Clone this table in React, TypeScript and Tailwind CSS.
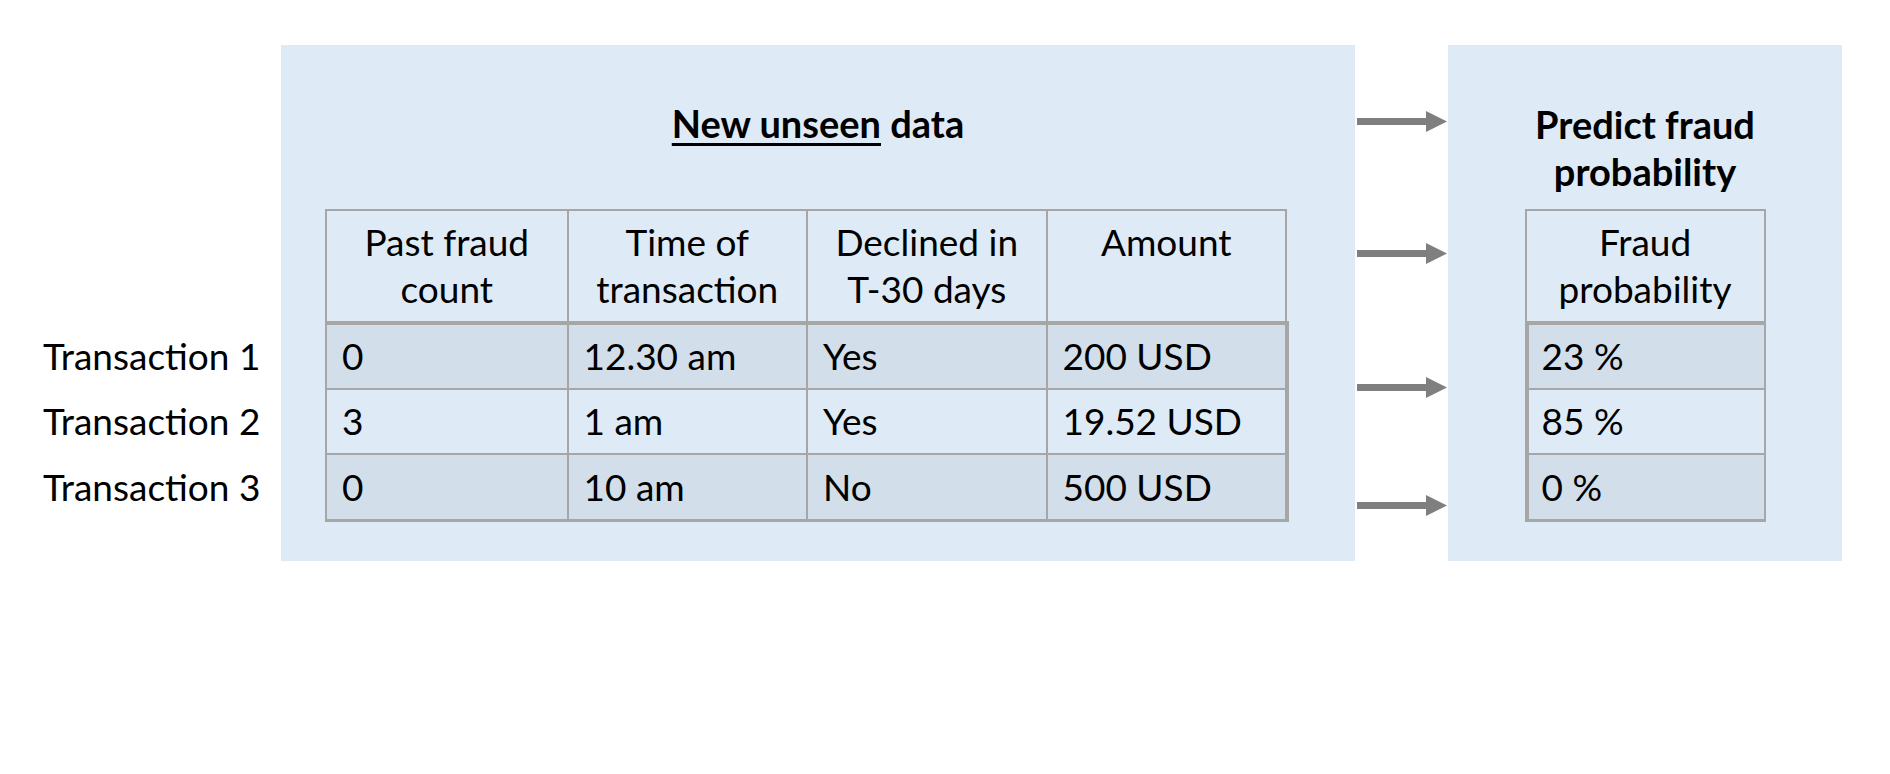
const font = "font-['Lato',_sans-serif]";

const columns = [
  ["Past fraud", "count"],
  ["Time of", "transaction"],
  ["Declined in", "T-30 days"],
  ["Amount"],
];

const rows = [
  ["0", "12.30 am", "Yes", "200 USD"],
  ["3", "1 am", "Yes", "19.52 USD"],
  ["0", "10 am", "No", "500 USD"],
];

const probabilities = ["23 %", "85 %", "0 %"];

// row boxes: first row sits under the thick header line, the others carry their own divider
const rowBox = [
  "h-[63px] bg-[#d2deea]",
  "h-[65px] border-t-2 border-[#a6a6a6] bg-[#deebf7]",
  "h-[66px] border-t-2 border-[#a6a6a6] bg-[#d2deea]",
];

const labelBox = ["h-[63px]", "h-[65px] pt-[2px]", "h-[66px] pt-[2px]"];

function Arrow({ className }: { className: string }) {
  return (
    <svg width="91" height="21" viewBox="0 0 91 21" className={className}>
      <rect x="0" y="7" width="69" height="7" fill="#7f7f7f" />
      <polygon points="69,0 90,10.5 69,21" fill="#7f7f7f" />
    </svg>
  );
}

function HeaderCell({ lines, first }: { lines: string[]; first?: boolean }) {
  return (
    <div
      className={`flex h-full flex-col items-center pt-[7px] ${first ? "" : "border-l-2 border-[#a6a6a6]"}`}
    >
      {lines.map((l) => (
        <span key={l}>{l}</span>
      ))}
    </div>
  );
}

export default function App() {
  return (
    <div className={`h-[774px] w-[1890px] bg-white text-[37px] leading-[47px] text-black ${font}`}>
      <div className="flex pt-[45px]">
        {/* row labels outside the panel */}
        <div className="w-[281px] pl-[43px] pt-[280px]">
          {rows.map((_, i) => (
            <div key={i} className={`flex items-center pb-[2px] ${labelBox[i]}`}>
              Transaction {i + 1}
            </div>
          ))}
        </div>

        {/* input data panel */}
        <div className="flex h-[516px] w-[1074px] flex-col bg-[#deebf7] pt-[55px]">
          <div className="h-[47px] text-center text-[38px] font-bold">
            <span className="underline decoration-[3px] underline-offset-[5px]">New unseen</span> data
          </div>
          <div className="ml-[44px] mt-[62px]">
            <div className="grid h-[112px] w-[962px] grid-cols-4 border-x-2 border-t-2 border-[#a6a6a6]">
              {columns.map((c, i) => (
                <HeaderCell key={i} lines={c} first={i === 0} />
              ))}
            </div>
            <div className="w-[964px] border-b-[3px] border-l-2 border-r-4 border-t-4 border-[#a6a6a6]">
              {rows.map((r, i) => (
                <div key={i} className={`grid grid-cols-4 ${rowBox[i]}`}>
                  {r.map((v, j) => (
                    <div
                      key={j}
                      className={`flex items-center pb-[2px] pl-[15px] ${j === 0 ? "" : "border-l-2 border-[#a6a6a6]"}`}
                    >
                      {v}
                    </div>
                  ))}
                </div>
              ))}
            </div>
          </div>
        </div>

        {/* arrows */}
        <div className="flex w-[93px] flex-col pl-[2px]">
          <Arrow className="mt-[66px]" />
          <Arrow className="mt-[111px]" />
          <Arrow className="mt-[113px]" />
          <Arrow className="mt-[97px]" />
        </div>

        {/* prediction panel */}
        <div className="flex h-[516px] w-[394px] flex-col items-center bg-[#deebf7] pt-[56px]">
          <div className="h-[94px] text-center text-[38px] font-bold">
            Predict fraud
            <br />
            probability
          </div>
          <div className="mt-[14px] w-[241px]">
            <div className="h-[112px] border-x-2 border-t-2 border-[#a6a6a6]">
              <HeaderCell lines={["Fraud", "probability"]} first />
            </div>
            <div className="border-b-[3px] border-l-4 border-r-2 border-t-4 border-[#a6a6a6]">
              {probabilities.map((p, i) => (
                <div key={p} className={`flex items-center pb-[2px] pl-[13px] ${rowBox[i]}`}>
                  {p}
                </div>
              ))}
            </div>
          </div>
        </div>
      </div>
    </div>
  );
}
